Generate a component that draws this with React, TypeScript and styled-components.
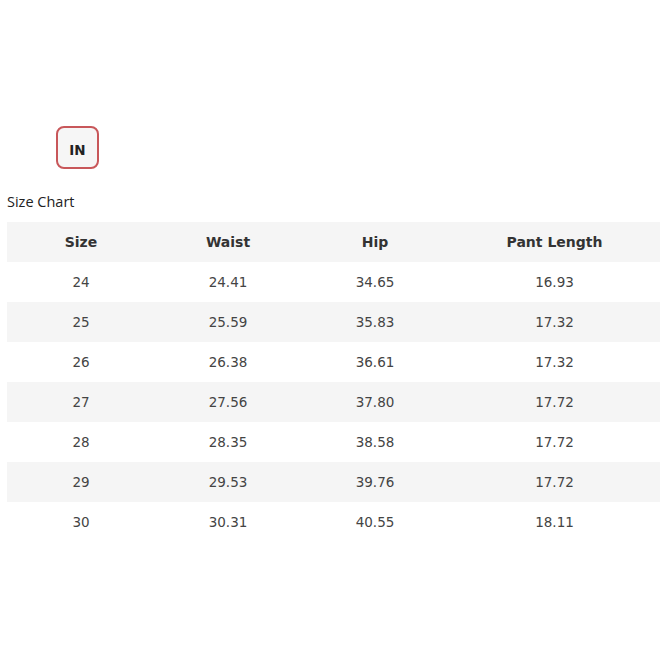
import React from "react";
import styled, { createGlobalStyle } from "styled-components";

const Global = createGlobalStyle`
  html, body { margin: 0; padding: 0; background: #fff; }
  body { font-family: "Open Sans", "Liberation Sans", sans-serif; color: #333; }
`;

const Page = styled.div`
  padding: 126px 3px 0 7px;
  display: flex;
  flex-direction: column;
`;

const UnitBar = styled.div`
  display: flex;
  padding-left: 49px;
`;

const UnitButton = styled.button<{ $active?: boolean }>`
  width: 43px;
  height: 43px;
  box-sizing: border-box;
  border: 2px solid ${(p) => (p.$active ? "#c8575a" : "#ccc")};
  border-radius: 8px;
  background: #f6f6f6;
  font-family: "DejaVu Sans", "Liberation Sans", sans-serif;
  font-weight: 700;
  font-size: 13.5px;
  color: #222;
  padding: 4px 0 0;
  display: flex;
  align-items: center;
  justify-content: center;
`;

const Title = styled.div`
  margin-top: 23px;
  font-size: 14.5px;
  line-height: 20px;
  color: #222;
  height: 30px;
`;

const Table = styled.table`
  width: 653px;
  border-collapse: collapse;
  table-layout: fixed;
  font-family: "DejaVu Sans", Verdana, sans-serif;
`;

const Row = styled.tr<{ $striped?: boolean }>`
  height: 40px;
  background: ${(p) => (p.$striped ? "#f5f5f5" : "#fff")};
`;

const Th = styled.th`
  font-weight: 700;
  font-size: 14px;
  color: #333;
  text-align: center;
  padding: 0;
`;

const Td = styled.td`
  font-size: 13.5px;
  color: #444;
  text-align: center;
  padding: 0;
`;

const widths = [148, 146, 148, 211];
const headers = ["Size", "Waist", "Hip", "Pant Length"];
const rows = [
  ["24", "24.41", "34.65", "16.93"],
  ["25", "25.59", "35.83", "17.32"],
  ["26", "26.38", "36.61", "17.32"],
  ["27", "27.56", "37.80", "17.72"],
  ["28", "28.35", "38.58", "17.72"],
  ["29", "29.53", "39.76", "17.72"],
  ["30", "30.31", "40.55", "18.11"],
];

export default function App() {
  return (
    <>
      <Global />
      <Page>
        <UnitBar>
          <UnitButton $active>IN</UnitButton>
        </UnitBar>
        <Title>Size Chart</Title>
        <Table>
          <colgroup>
            {widths.map((w, i) => (
              <col key={i} style={{ width: w }} />
            ))}
          </colgroup>
          <thead>
            <Row $striped>
              {headers.map((h) => (
                <Th key={h}>{h}</Th>
              ))}
            </Row>
          </thead>
          <tbody>
            {rows.map((r, i) => (
              <Row key={r[0]} $striped={i % 2 === 1}>
                {r.map((c, j) => (
                  <Td key={j}>{c}</Td>
                ))}
              </Row>
            ))}
          </tbody>
        </Table>
      </Page>
    </>
  );
}
